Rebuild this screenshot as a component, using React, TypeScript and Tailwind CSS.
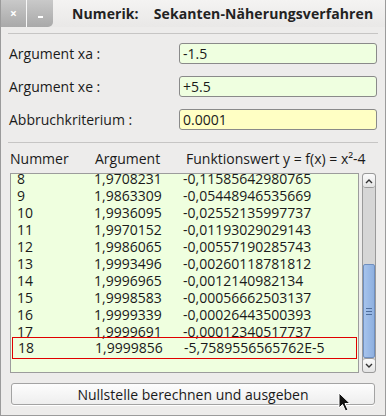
import { useState } from "react"

const rows = [
  ["8", "1,9708231", "-0,11585642980765"],
  ["9", "1,9863309", "-0,05448946535669"],
  ["10", "1,9936095", "-0,02552135997737"],
  ["11", "1,9970152", "-0,01193029029143"],
  ["12", "1,9986065", "-0,00557190285743"],
  ["13", "1,9993496", "-0,00260118781812"],
  ["14", "1,9996965", "-0,0012140982134"],
  ["15", "1,9998583", "-0,00056662503137"],
  ["16", "1,9999339", "-0,00026443500393"],
  ["17", "1,9999691", "-0,00012340517737"],
  ["18", "1,9999856", "-5,7589556565762E-5"],
]

const fields = [
  { label: "Argument xa :", value: "-1.5", bg: "bg-[#efffe0]" },
  { label: "Argument xe :", value: "+5.5", bg: "bg-[#efffe0]" },
  { label: "Abbruchkriterium :", value: "0.0001", bg: "bg-[#ffffc4]" },
]

export default function App() {
  const [selected] = useState(rows.length - 1)

  return (
    <div
      className="flex h-[416px] w-[386px] flex-col overflow-hidden border border-t-0 border-[#9b9b9b] bg-[#edeceb] text-[14px] text-[#1a1a1a]"
      style={{ fontFamily: '"Open Sans", "DejaVu Sans", sans-serif' }}
    >
      {/* Title bar */}
      <div className="flex h-[27px] shrink-0 items-center bg-gradient-to-b from-[#f4f3f2] to-[#e9e8e7]">
        <div className="flex h-full">
          <div className="flex w-[26px] items-center justify-center border-r border-[#f8f8f8] bg-gradient-to-b from-[#c9c9c9] to-[#a9a9a9] text-[12px] font-bold text-white">
            ×
          </div>
          <div className="flex w-[26px] items-end justify-center rounded-br-[5px] bg-gradient-to-b from-[#c9c9c9] to-[#a9a9a9] pb-[9px]">
            <div className="h-[2px] w-[5px] bg-white" />
          </div>
        </div>
        <div className="ml-[19px] flex gap-[15px] font-bold tracking-[0.1px] text-[#222]">
          <span>Numerik:</span>
          <span>Sekanten-Näherungsverfahren</span>
        </div>
      </div>

      <div className="mx-[7px] mt-[6px] border-t border-[#c6c5c4]" />

      {/* Input fields */}
      <div className="mt-[9px] flex flex-col gap-[12px] pl-[8px] pr-[8px]">
        {fields.map((f) => (
          <div key={f.label} className="flex h-[21px] items-center">
            <span className="w-[170px]">{f.label}</span>
            <div
              className={`flex h-[21px] flex-1 items-center rounded-[3px] border border-[#8a8a8a] px-[3px] ${f.bg}`}
            >
              {f.value}
            </div>
          </div>
        ))}
      </div>

      <div className="mx-[7px] mt-[12px] border-t border-[#c6c5c4]" />

      {/* Table header */}
      <div className="mt-[5px] flex h-[20px] items-center pl-[9px]">
        <span className="w-[85px]">Nummer</span>
        <span className="w-[91px]">Argument</span>
        <span>Funktionswert y = f(x) = x²-4</span>
      </div>

      {/* List with scrollbar */}
      <div className="mt-[5px] flex h-[200px] gap-[3px] pl-[9px] pr-[9px]">
        <div className="relative flex-1 overflow-hidden border border-[#9c9c9c] bg-[#efffdf]">
          <div className="-mt-[4px] flex flex-col">
            {rows.map((r, i) => (
              <div
                key={r[0]}
                className={`flex items-center ${
                  i === selected
                    ? "mx-[1px] -mt-[3px] h-[22px] border border-[#e00000] pl-[5px]"
                    : "h-[17px] pl-[6px]"
                }`}
              >
                <span className="w-[77px] leading-none">{r[0]}</span>
                <span className="w-[89px] leading-none">{r[1]}</span>
                <span className="leading-none">{r[2]}</span>
              </div>
            ))}
          </div>
        </div>
        <div className="flex w-[14px] flex-col overflow-hidden rounded-[3px] border border-[#9a9a9a] bg-[#d6d6d6]">
          <div className="flex h-[14px] items-center justify-center rounded-[3px] border-b border-[#9a9a9a] bg-gradient-to-b from-[#fbfbfb] to-[#e4e4e4]">
            <svg width="8" height="6" viewBox="0 0 8 6">
              <path d="M1 5 L4 2 L7 5" stroke="#333" strokeWidth="1.4" fill="none" />
            </svg>
          </div>
          <div className="flex-1" />
          <div className="flex h-[94px] flex-col items-center justify-center gap-[2px] rounded-[2px] border border-[#6f8fc0] bg-gradient-to-r from-[#a6c3ec] to-[#8eb0e0]">
            <div className="h-px w-[6px] bg-[#4f6e9c]" />
            <div className="h-px w-[6px] bg-[#4f6e9c]" />
            <div className="h-px w-[6px] bg-[#4f6e9c]" />
          </div>
          <div className="flex h-[14px] items-center justify-center rounded-[3px] border-t border-[#9a9a9a] bg-gradient-to-b from-[#fbfbfb] to-[#e4e4e4]">
            <svg width="8" height="6" viewBox="0 0 8 6">
              <path d="M1 1 L4 4 L7 1" stroke="#333" strokeWidth="1.4" fill="none" />
            </svg>
          </div>
        </div>
      </div>

      {/* Button */}
      <div className="relative mt-[10px] px-[10px]">
        <button className="flex h-[22px] w-full items-center justify-center rounded-[3px] border border-[#a3a3a3] bg-gradient-to-b from-[#fdfdfd] to-[#eeeeee] text-[#1a1a1a] shadow-[0_1px_0_#fff]">
          Nullstelle berechnen und ausgeben
        </button>
        <svg className="absolute left-[337px] top-[9px]" width="14" height="21" viewBox="0 0 14 21">
          <path d="M1 1 L1 16 L4.5 12.5 L7.5 19 L10 18 L7 11.5 L12 11.5 Z" fill="#111" stroke="#fff" strokeWidth="1" />
        </svg>
      </div>
    </div>
  )
}
